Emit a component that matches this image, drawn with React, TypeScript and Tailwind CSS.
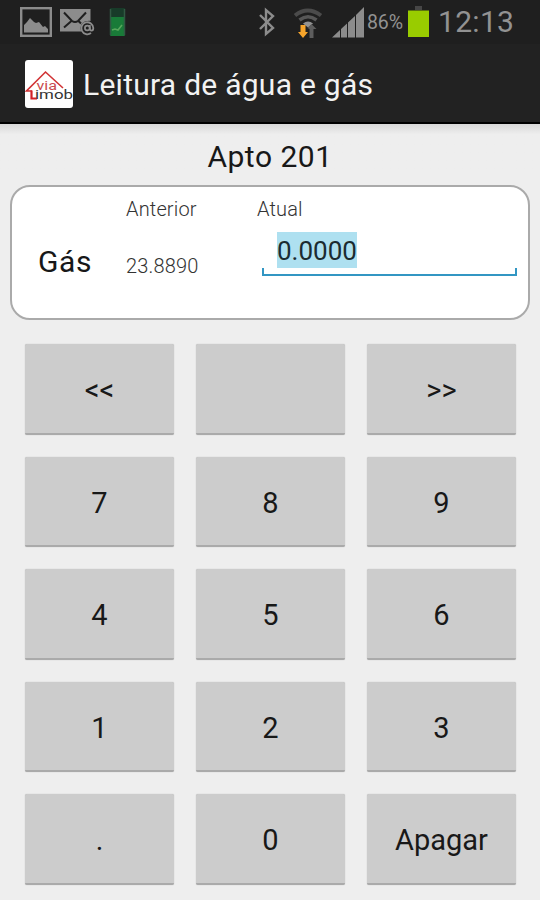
const keys = ["<<", "", ">>", "7", "8", "9", "4", "5", "6", "1", "2", "3", ".", "0", "Apagar"];

const StatusBar = () => {
  return (
    <div className="flex h-[44px] shrink-0 items-center bg-[#1f1f1f] pl-5 text-[#929292]">
      <svg width={32} height={30} viewBox="0 0 32 30">
        <rect x="1.2" y="1.2" width="29.6" height="27.6" fill="none" stroke="#8c8c8c" strokeWidth="2.4" />
        <path d="M4 25.500V18l3-3 3-4 4 4 2 1 3-1 4 5 2-1 3 3v3.500z" fill="#8c8c8c" />
      </svg>
      <svg className="ml-2" width={35} height={28} viewBox="0 0 35 28">
        <path d="M0 1h30.500v12a8 8 0 0 0-9 10.500H0z" fill="#8c8c8c" />
        <path d="M4 4.500 12 13q3 2 6 0l8-8.500M4 19.500l8-7M18 12.500l3 3" fill="none" stroke="#1f1f1f" strokeWidth="2" />
        <circle cx="27.500" cy="20" r="7" fill="#1f1f1f" />
        <path d="M31 25a6 6 0 1 1 2.300-5c0 3.500-3.500 3.500-3.500 0v-3" fill="none" stroke="#8c8c8c" strokeWidth="1.800" />
        <circle cx="27.300" cy="20" r="2.400" fill="none" stroke="#8c8c8c" strokeWidth="1.700" />
      </svg>
      <svg className="ml-[14px]" width={17} height={30} viewBox="0 0 17 30">
        <rect x="1" y="1" width="15" height="10" rx="1" fill="#183b29" />
        <rect x="1" y="10" width="15" height="19" rx="1" fill="#197b38" />
        <path d="M1.500 2v26M15.500 2v26" stroke="#315943" strokeWidth="1.500" />
        <path d="m3 23 3-1 3 1 4-5" fill="none" stroke="#58a75c" strokeWidth="1.600" />
      </svg>
      <svg className="ml-[132px]" width={18} height={30} viewBox="0 0 18 30">
        <path d="m2 8 13 13-7 6V3l7 6L2 22" fill="none" stroke="#8c8c8c" strokeWidth="2.400" />
      </svg>
      <svg className="ml-[17px]" width={30} height={34} viewBox="0 0 30 34">
        <path d="M2 10.500q12.500-10 26 0" fill="none" stroke="#4b4b4b" strokeWidth="4" />
        <path d="M6.500 15q8.500-6.500 17 0" fill="none" stroke="#575757" strokeWidth="3.500" />
        <path d="M10 18.500q5-4 10 0l-5 4z" fill="#929292" />
        <path d="m14.500 23 4-4 5 5h-3v9h-4v-9z" fill="#5d5d5d" />
        <path d="M7.500 20h5v7H15l-5 6-5-6h2.500z" fill="#f6a42b" />
      </svg>
      <svg className="ml-[9px]" width={33} height={32} viewBox="0 0 33 32">
        <path d="M0 31.500 8 24v7.500zM9 23l6-5.500v14H9zM16 16.500l7-6.500v21.500h-7zM24 9 32 1v30.500h-8z" fill="#8c8c8c" />
      </svg>
      <span className="mt-0.5 ml-[2px] w-[39px] text-[19.5px] tracking-[-0.1px]">86%</span>
      <svg className="ml-[2px]" width={21} height={32} viewBox="0 0 21 32">
        <rect x="7" y="0" width="7" height="4" fill="#464646" />
        <rect x="0" y="4.500" width="21" height="26.500" fill="#9c0" />
      </svg>
      <span className="ml-[9px] text-[30px] leading-none tracking-[0.3px]">12:13</span>
    </div>
  );
};

const Logo = () => {
  return (
    <svg className="mt-0.5 rounded-[3px] bg-white" width={48} height={48} viewBox="0 0 48 48">
      <path d="M7 31H1.500L20.500 12 38 28" fill="none" stroke="#d13335" strokeWidth="1.600" />
      <path d="M6.500 30.500v8H12" fill="none" stroke="#d32027" strokeWidth="2.200" />
      <text x="11.500" y="29.500" fontSize="12" textLength="20.500" lengthAdjust="spacingAndGlyphs" fill="#c94a50">
        via
      </text>
      <text x="10" y="39" fontSize="12" textLength="38" lengthAdjust="spacingAndGlyphs" fill="#333">
        imob
      </text>
    </svg>
  );
};

const Header = () => {
  return (
    <header className="flex h-20 shrink-0 items-center border-b-2 border-black bg-[#222] pl-[25px]">
      <Logo />
      <h1 className="mt-[3px] ml-[10px] text-[30px] leading-none tracking-[0.26px] text-[#f2f2f2]">
        Leitura de água e gás
      </h1>
    </header>
  );
};

const Reading = () => {
  return (
    <section className="mx-[10px] mt-[9px] flex h-[135px] shrink-0 rounded-[20px] border-2 border-[#aaa] bg-white">
      <div className="w-[114px] pt-[60px] pl-[26px] text-[30px] leading-[30px] tracking-[0.6px]">Gás</div>
      <div className="w-[131px] text-[20px] leading-5 font-light tracking-[0.15px] text-[#333]">
        <div className="pt-[12px]">Anterior</div>
        <div className="pt-[37px]">23.8890</div>
      </div>
      <div>
        <div className="pt-[12px] text-[20px] leading-5 font-light tracking-[0.15px] text-[#333]">Atual</div>
        <div className="mt-[13px] ml-[5px] w-[255px] pl-[15px]">
          <span className="block h-9 w-20 bg-[#aee0f0] pt-px text-[26px] leading-[37px] text-[#1b2b31]">0.0000</span>
        </div>
        <div className="ml-[5px] h-2 w-[255px] border-x-2 border-b-2 border-[#3296c3]" />
      </div>
    </section>
  );
};

const Keypad = () => {
  return (
    <div className="mt-6 grid grid-cols-[149px_149px_149px] gap-x-[22px] gap-y-[22px] pl-[25px]">
      {keys.map((key, i) => {
        return (
          <button
            key={i}
            className="h-[90.5px] rounded-[2px] border-b-2 border-[#aaa] bg-[#ccc] pt-[5px] text-[29px] leading-none shadow-[0_0_1px_#aaa]"
          >
            {key}
          </button>
        );
      })}
    </div>
  );
};

const App = () => {
  return (
    <div className="flex h-[900px] w-[540px] flex-col overflow-hidden bg-[#eee] font-['Roboto',sans-serif] text-[#181818]">
      <StatusBar />
      <Header />
      <div className="h-[52px] shrink-0 bg-linear-to-b from-[#d8d8d8] to-[#eee] to-20% pt-[16px] text-center text-[30px] leading-[34px] tracking-[0.5px]">
        Apto 201
      </div>
      <Reading />
      <Keypad />
    </div>
  );
};

export default App;
